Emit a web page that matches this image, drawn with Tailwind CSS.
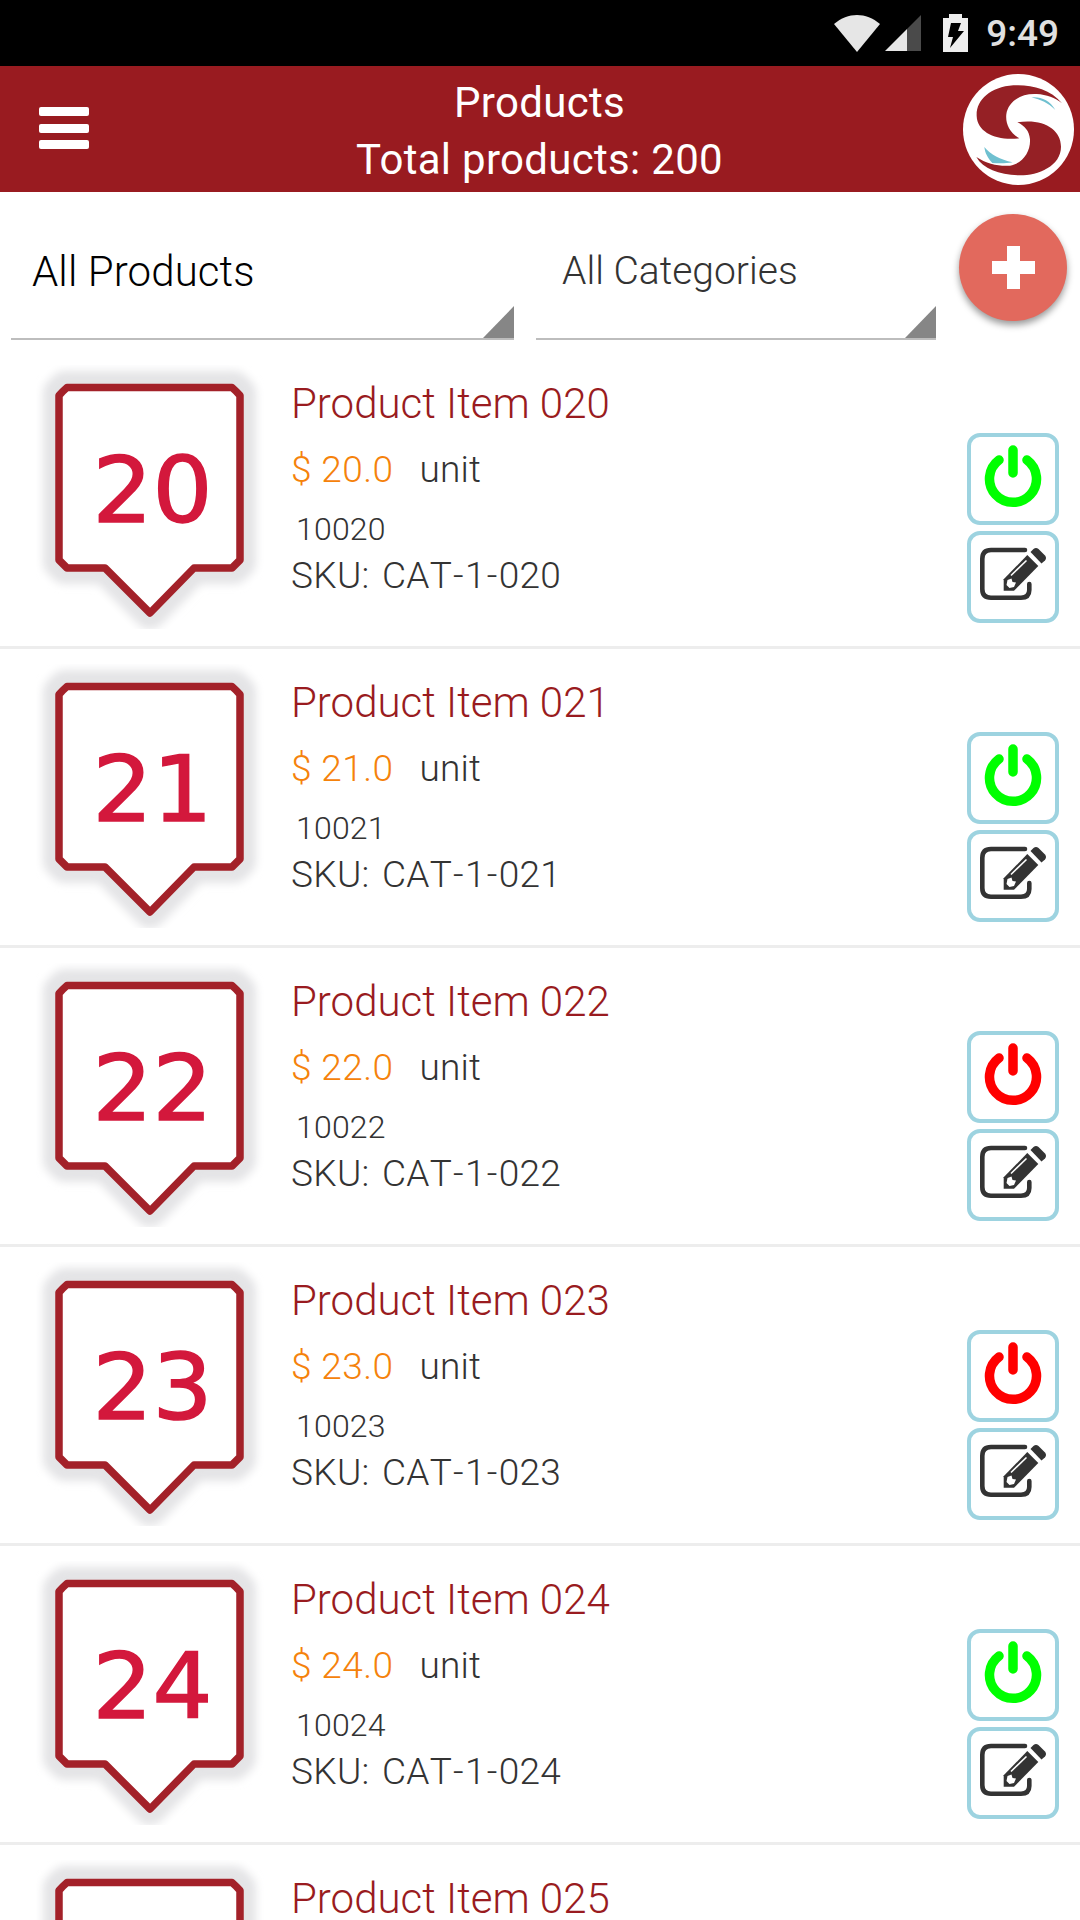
<!DOCTYPE html>
<html lang="en">

<head>
    <meta charset="UTF-8">
    <meta name="viewport" content="width=device-width, initial-scale=1.0">
    <title>Products</title>
    <script src="https://cdn.jsdelivr.net/npm/@tailwindcss/browser@4"></script>
</head>

<body class="bg-white font-['Roboto',sans-serif] w-[1080px] h-[1920px] overflow-hidden flex flex-col">
    <!-- Status bar -->
    <div class="bg-black h-[66px] shrink-0 flex items-center justify-end pr-[21px]">
        <svg class="w-[46px] h-[37px] mr-[5px]" viewBox="0 0 46 37" fill="#e6e6e6">
            <path d="M0 9C14-3 32-3 46 9L23 37Z" />
        </svg>
        <svg class="w-[36px] h-[36px] mr-[22px]" viewBox="0 0 36 36">
            <path d="M36 0V36H22V14Z" fill="#4a4a4a" />
            <path d="M0 36L22 14V36Z" fill="#e6e6e6" />
        </svg>
        <svg class="w-[25px] h-[38px] mr-[18px]" viewBox="0 0 25 38">
            <path d="M6 0H19V4H25V38H0V4H6Z" fill="#eee" />
            <path d="M8 9H18L15 17H21L7 34L10 23H5Z" fill="#000" />
        </svg>
        <span class="text-[#e0e0e0] text-[37px] leading-[64px] pt-[2px] font-medium">9:49</span>
    </div>

    <!-- Header -->
    <header class="bg-[#991b20] h-[126px] shrink-0 flex items-center justify-between pl-[39px] pr-[6px]">
        <div class="w-[111px] pb-[2px]">
            <div class="w-[50px] flex flex-col gap-[7.5px]">
                <div class="h-[9px] bg-white rounded-[2px]"></div>
                <div class="h-[9px] bg-white rounded-[2px]"></div>
                <div class="h-[9px] bg-white rounded-[2px]"></div>
            </div>
        </div>
        <div class="text-white text-center text-[42px] leading-[57px] tracking-[0.3px] pt-[4px] pr-[34px]">
            <h1>Products</h1>
            <p>Total products: 200</p>
        </div>
        <svg class="w-[111px] h-[111px]" viewBox="489 219 333 333">
            <circle cx="655.500" cy="385.500" r="166.500" fill="#fff" />
            <path d="M786 307C750 262 690 250 640 253C570 258 528 298 530 345C532 395 590 420 658 412C628 395 616 368 619 340C624 302 662 276 710 279C740 281 765 290 786 307Z" fill="#952025" />
            <path d="M652 364C730 352 783 385 783 437C783 495 715 523 660 523C600 522 550 505 529 468C560 489 600 497 630 494C670 487 692 450 690 415C688 390 674 374 652 364Z" fill="#952025" />
            <path d="M694 289C720 286 750 296 766 327C745 306 722 296 694 289Z" fill="#6fc0d0" />
            <path d="M553 438C572 462 600 475 638 484C615 488 595 487 577 486C562 470 555 455 553 438Z" fill="#6fc0d0" />
        </svg>
    </header>

    <!-- Filters -->
    <div class="h-[158px] shrink-0 flex pl-[11px]">
        <div class="w-[503px] h-[148px] border-b-2 border-[#bdbdbd] relative pl-[21px] mr-[22px]">
            <span class="block pt-[55px] text-[42px] leading-[50px] tracking-[0.1px] font-light text-black">All Products</span>
            <svg class="absolute right-0 bottom-0 w-[31px] h-[32px]" viewBox="0 0 31 32">
                <path d="M31 0V32H0Z" fill="#868686" />
            </svg>
        </div>
        <div class="w-[400px] h-[148px] border-b-2 border-[#bdbdbd] relative pl-[26px] mr-[16px]">
            <span class="block pt-[54px] text-[39px] leading-[50px] font-light text-[#333]">All Categories</span>
            <svg class="absolute right-0 bottom-0 w-[31px] h-[32px]" viewBox="0 0 31 32">
                <path d="M31 0V32H0Z" fill="#868686" />
            </svg>
        </div>
        <div class="mt-[22px] ml-[7px] w-[108px] h-[107px] rounded-full bg-[#e2695d] shadow-[0_4px_7px_rgba(0,0,0,0.4)] flex items-center justify-center">
            <svg class="w-[43px] h-[43px]" viewBox="0 0 43 43">
                <path d="M15 0H28V15H43V28H28V43H15V28H0V15H15Z" fill="#fff" />
            </svg>
        </div>
    </div>

    <!-- Product list -->
    <main id="product-list" class="flex-1 min-h-0 overflow-hidden flex flex-col"></main>

    <script>
        const products = [
            { id: 20, active: true },
            { id: 21, active: true },
            { id: 22, active: false },
            { id: 23, active: false },
            { id: 24, active: true },
            { id: 25, active: true }
        ];

        document.getElementById('product-list').innerHTML = products.map(({ id, active }) => `
            <div class="h-[299px] shrink-0 border-b-3 border-[#ededed] flex">
                <svg class="w-[228px] h-[264px] ml-[36px] mt-[15px] shrink-0" viewBox="36 16 228 264">
                    <defs>
                        <filter id="shade-${id}" x="-20%" y="-20%" width="140%" height="140%">
                            <feGaussianBlur stdDeviation="4" />
                        </filter>
                    </defs>
                    <path d="M65 38H234L240 44V213L234 219H194L150 264L105 219H65L59 213V44Z" fill="#e4e4e6" stroke="#e4e4e6" stroke-width="32" stroke-linejoin="round" filter="url(#shade-${id})" />
                    <path d="M67 38.500H232Q236 42 240 46.500V211Q236 215 232 219H194L150 264L105 219H67Q63 215 59 211V46.500Q63 42 67 38.500Z" fill="#fff" stroke="#a32129" stroke-width="7.500" stroke-linejoin="round" />
                    <text x="152.500" y="173" text-anchor="middle" font-family="DejaVu Sans" font-size="90" textLength="120" lengthAdjust="spacingAndGlyphs" fill="#d3183c" stroke="#d3183c" stroke-width="1.500">${id}</text>
                </svg>
                <div class="ml-[27px] flex-1 font-light text-[#333] whitespace-nowrap">
                    <h2 class="mt-[29px] text-[42px] leading-[50px] text-[#991b20]">Product Item 0${id}</h2>
                    <div class="mt-[19px] text-[37px] leading-[44px] flex gap-[26px]">
                        <span class="text-[#f5820b] tracking-[0.4px]">$ ${id}.0</span>
                        <span class="tracking-[0.2px]">unit</span>
                    </div>
                    <p class="mt-[18px] pl-[5px] text-[32px] leading-[38px] tracking-[0.2px]">100${id}</p>
                    <p class="mt-[6px] text-[37px] leading-[44px] tracking-[0.3px] [word-spacing:3px] [font-kerning:none]">SKU: CAT<span class="px-[1px]">-</span>1<span class="px-[1px]">-</span>0${id}</p>
                </div>
                <div class="mt-[83px] mr-[21px] flex flex-col gap-[6px]">
                    <button class="w-[92px] h-[92px] border-4 border-[#9dd3e0] rounded-[13px]">
                        <svg class="w-[84px] h-[84px]" viewBox="4 4 84 84" fill="none" stroke="${active ? '#00ff00' : '#ff0000'}" stroke-width="9.500" stroke-linecap="round">
                            <path d="M32 27A23.500 23.500 0 1 0 60 27M46 17V40" />
                        </svg>
                    </button>
                    <button class="w-[92px] h-[92px] border-4 border-[#9dd3e0] rounded-[13px]">
                        <svg class="w-[84px] h-[84px]" viewBox="4 4 84 84">
                            <path d="M58 19H24Q15.300 19 15.300 28V58Q15.300 66.700 24 66.700H54Q62.300 66.700 62.300 59V53" fill="none" stroke="#333" stroke-width="4.600" stroke-linecap="round" />
                            <path d="M36.700 59.700V48.300L60.300 24L71.300 35L47 59.700Z" fill="#333" />
                            <path d="M63.500 21L66.500 18Q69 16 71.500 18L78 24.500Q80 27 78 29.500L74.500 32.500Z" fill="#333" />
                            <path d="M44 44.500L59.500 29.500" stroke="#fff" stroke-width="1.600" />
                            <path d="M40.500 49L44.500 47.500L45.500 51L49 51.500L47 56L42.500 57L39.500 54Z" fill="#fff" />
                        </svg>
                    </button>
                </div>
            </div>`).join('');
    </script>
</body>

</html>
